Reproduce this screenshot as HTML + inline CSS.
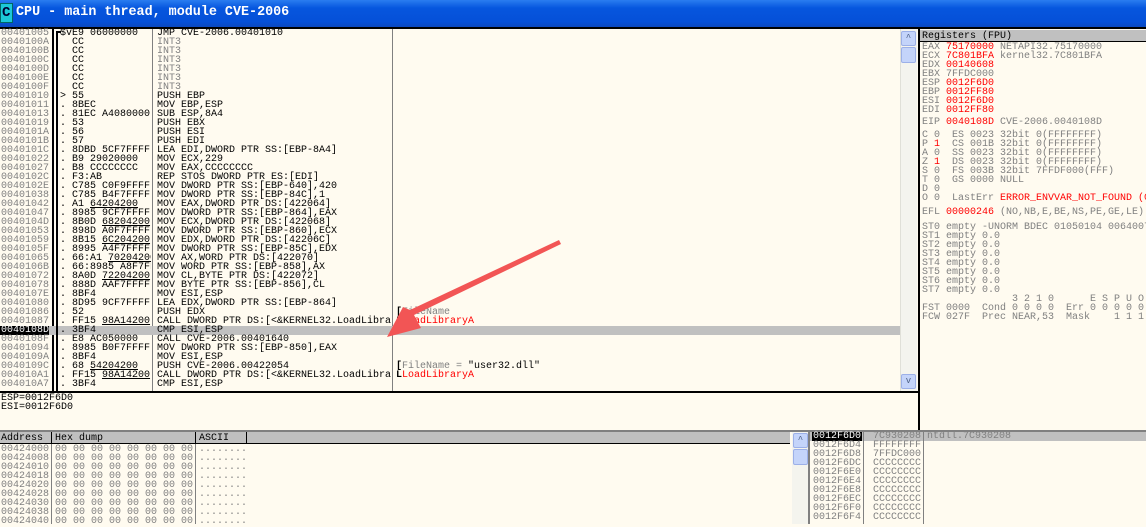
<!DOCTYPE html>
<html><head><meta charset="utf-8"><style>
*{margin:0;padding:0;box-sizing:border-box}
body{width:1146px;height:524px;overflow:hidden;background:#fffbf0;position:relative;font-family:"Liberation Mono",monospace;font-size:10px;line-height:9px}
.a{position:absolute;white-space:pre}
pre{font-family:"Liberation Mono",monospace;font-size:10px;line-height:9px;margin:0}
.g{color:#808080}.r{color:#f00}.k{color:#000}
u{text-decoration:underline}
</style></head><body>
<!-- title -->
<div class="a" style="left:0;top:0;width:1146px;height:27px;background:linear-gradient(#2a7df0,#0656de 30%,#0550d8 80%,#0a48c0)"></div>
<div class="a" style="left:0;top:3px;width:13px;height:20px;background:#1cc8d8;border:1px solid #066"></div>
<div class="a" style="left:2px;top:5px;font:bold 14px 'Liberation Mono',monospace;line-height:16px;color:#003">C</div>
<div class="a" style="left:16px;top:5px;font:bold 13.4px 'Liberation Mono',monospace;line-height:16px;color:#fff">CPU - main thread, module CVE-2006</div>
<div class="a" style="left:0;top:27px;width:1146px;height:2px;background:#000"></div>

<!-- disasm pane -->
<div class="a" style="left:0;top:29px;width:900px;height:362px;background:#fffbf0"></div>
<div class="a" style="left:52px;top:29px;width:2px;height:362px;background:#000"></div>
<div class="a" style="left:152px;top:29px;width:1px;height:362px;background:#808080"></div>
<div class="a" style="left:392px;top:29px;width:1px;height:362px;background:#808080"></div>
<div class="a" style="left:0;top:326px;width:900px;height:9px;background:#c0c0c0"></div>
<div class="a" style="left:0;top:326px;width:49px;height:9px;background:#000"></div>
<pre class="a g" style="left:1px;top:29px">00401005
0040100A
0040100B
0040100C
0040100D
0040100E
0040100F
00401010
00401011
00401013
00401019
0040101A
0040101B
0040101C
00401022
00401027
0040102C
0040102E
00401038
00401042
00401047
0040104D
00401053
00401059
0040105F
00401065
0040106B
00401072
00401078
0040107E
00401080
00401086
00401087
<span style="color:#fff">0040108D</span>
0040108F
00401094
0040109A
0040109C
004010A1
004010A7</pre>
<div class="a" style="left:56px;top:31px;width:2px;height:360px;background:#000"></div>
<div class="a" style="left:56px;top:31px;width:5px;height:2px;background:#000"></div>
<pre class="a k" style="left:54px;top:29px;overflow:hidden;width:97px"> $vE9 06000000
   CC
   CC
   CC
   CC
   CC
   CC
 > 55
 . 8BEC
 . 81EC A4080000
 . 53
 . 56
 . 57
 . 8DBD 5CF7FFFF
 . B9 29020000
 . B8 CCCCCCCC
 . F3:AB
 . C785 C0F9FFFF
 . C785 B4F7FFFF
 . A1 <u>64204200</u>
 . 8985 9CF7FFFF
 . 8B0D <u>68204200</u>
 . 898D A0F7FFFF
 . 8B15 <u>6C204200</u>
 . 8995 A4F7FFFF
 . 66:A1 <u>70204200</u>
 . 66:8985 A8F7FFFF
 . 8A0D <u>72204200</u>
 . 888D AAF7FFFF
 . 8BF4
 . 8D95 9CF7FFFF
 . 52
 . FF15 <u>98A14200</u>
 . 3BF4
 . E8 AC050000
 . 8985 B0F7FFFF
 . 8BF4
 . 68 <u>54204200</u>
 . FF15 <u>98A14200</u>
 . 3BF4</pre>
<div class="a" style="left:56px;top:31px;width:2px;height:360px;background:#000"></div>
<pre class="a k" style="left:157px;top:29px;overflow:hidden;width:234px">JMP CVE-2006.00401010
<span class="g">INT3
INT3
INT3
INT3
INT3
INT3</span>
PUSH EBP
MOV EBP,ESP
SUB ESP,8A4
PUSH EBX
PUSH ESI
PUSH EDI
LEA EDI,DWORD PTR SS:[EBP-8A4]
MOV ECX,229
MOV EAX,CCCCCCCC
REP STOS DWORD PTR ES:[EDI]
MOV DWORD PTR SS:[EBP-640],420
MOV DWORD PTR SS:[EBP-84C],1
MOV EAX,DWORD PTR DS:[422064]
MOV DWORD PTR SS:[EBP-864],EAX
MOV ECX,DWORD PTR DS:[422068]
MOV DWORD PTR SS:[EBP-860],ECX
MOV EDX,DWORD PTR DS:[42206C]
MOV DWORD PTR SS:[EBP-85C],EDX
MOV AX,WORD PTR DS:[422070]
MOV WORD PTR SS:[EBP-858],AX
MOV CL,BYTE PTR DS:[422072]
MOV BYTE PTR SS:[EBP-856],CL
MOV ESI,ESP
LEA EDX,DWORD PTR SS:[EBP-864]
PUSH EDX
CALL DWORD PTR DS:[&lt;&amp;KERNEL32.LoadLibra
CMP ESI,ESP
CALL CVE-2006.00401640
MOV DWORD PTR SS:[EBP-850],EAX
MOV ESI,ESP
PUSH CVE-2006.00422054
CALL DWORD PTR DS:[&lt;&amp;KERNEL32.LoadLibra
CMP ESI,ESP</pre>
<pre class="a" style="left:396px;top:308px"><b>[</b><span class="g">FileName</span>
<b>L</b><span class="r">LoadLibraryA</span></pre>
<pre class="a" style="left:396px;top:362px"><b>[</b><span class="g">FileName = </span>"user32.dll"
<b>L</b><span class="r">LoadLibraryA</span></pre>
<!-- scrollbar -->
<div class="a" style="left:900px;top:29px;width:17px;height:362px;background:#f4f4ee;border-left:1px solid #e0e0d8"></div>
<div class="a" style="left:901px;top:31px;width:15px;height:15px;background:#c4d4fa;border:1px solid #9cb0e8;border-radius:2px;color:#4d6185;font-size:9px;text-align:center;line-height:13px">^</div>
<div class="a" style="left:901px;top:47px;width:15px;height:16px;background:#c4d4fa;border:1px solid #9cb0e8;border-radius:2px"></div>
<div class="a" style="left:901px;top:374px;width:15px;height:15px;background:#c4d4fa;border:1px solid #9cb0e8;border-radius:2px;color:#4d6185;font-size:9px;text-align:center;line-height:13px">v</div>
<div class="a" style="left:0;top:391px;width:918px;height:2px;background:#000"></div>

<!-- registers -->
<div class="a" style="left:918px;top:29px;width:2px;height:402px;background:#000"></div>
<div class="a" style="left:920px;top:30px;width:226px;height:12px;background:#c0c0c0;border-bottom:1px solid #000"></div>
<pre class="a k" style="left:922px;top:32px">Registers (FPU)</pre>
<pre class="a g" style="left:922px;top:43px">EAX <span class="r">75170000</span> NETAPI32.75170000
ECX <span class="r">7C801BFA</span> kernel32.7C801BFA
EDX <span class="r">00140608</span>
EBX 7FFDC000
ESP <span class="r">0012F6D0</span>
EBP <span class="r">0012FF80</span>
ESI <span class="r">0012F6D0</span>
EDI <span class="r">0012FF80</span></pre>
<pre class="a g" style="left:922px;top:118px">EIP <span class="r">0040108D</span> CVE-2006.0040108D</pre>
<pre class="a g" style="left:922px;top:131px">C 0  ES 0023 32bit 0(FFFFFFFF)
P <span class="r">1</span>  CS 001B 32bit 0(FFFFFFFF)
A 0  SS 0023 32bit 0(FFFFFFFF)
Z <span class="r">1</span>  DS 0023 32bit 0(FFFFFFFF)
S 0  FS 003B 32bit 7FFDF000(FFF)
T 0  GS 0000 NULL
D 0
O 0  LastErr <span class="r">ERROR_ENVVAR_NOT_FOUND (0</span></pre>
<pre class="a g" style="left:922px;top:208px">EFL <span class="r">00000246</span> (NO,NB,E,BE,NS,PE,GE,LE)</pre>
<pre class="a g" style="left:922px;top:223px">ST0 empty -UNORM BDEC 01050104 0064007
ST1 empty 0.0
ST2 empty 0.0
ST3 empty 0.0
ST4 empty 0.0
ST5 empty 0.0
ST6 empty 0.0
ST7 empty 0.0
               3 2 1 0      E S P U O
FST 0000  Cond 0 0 0 0  Err 0 0 0 0 0
FCW 027F  Prec NEAR,53  Mask    1 1 1</pre>

<!-- info pane -->
<pre class="a k" style="left:1px;top:394px">ESP=0012F6D0
ESI=0012F6D0</pre>
<div class="a" style="left:0;top:430px;width:1146px;height:2px;background:#808080"></div>

<!-- dump -->
<div class="a" style="left:0;top:432px;width:790px;height:12px;background:#c0c0c0;border-bottom:1px solid #000"></div>
<div class="a" style="left:0;top:432px;width:247px;height:12px;border-right:1px solid #000"></div>
<div class="a" style="left:51px;top:432px;width:1px;height:12px;background:#000"></div>
<div class="a" style="left:195px;top:432px;width:1px;height:12px;background:#000"></div>
<pre class="a k" style="left:1px;top:434px">Address  Hex dump                ASCII</pre>
<div class="a" style="left:51px;top:444px;width:1px;height:80px;background:#808080"></div>
<div class="a" style="left:195px;top:444px;width:1px;height:80px;background:#808080"></div>
<pre class="a g" style="left:1px;top:445px">00424000 00 00 00 00 00 00 00 00 ........
00424008 00 00 00 00 00 00 00 00 ........
00424010 00 00 00 00 00 00 00 00 ........
00424018 00 00 00 00 00 00 00 00 ........
00424020 00 00 00 00 00 00 00 00 ........
00424028 00 00 00 00 00 00 00 00 ........
00424030 00 00 00 00 00 00 00 00 ........
00424038 00 00 00 00 00 00 00 00 ........
00424040 00 00 00 00 00 00 00 00 ........</pre>
<div class="a" style="left:792px;top:432px;width:16px;height:92px;background:#f4f4ee"></div>
<div class="a" style="left:793px;top:433px;width:15px;height:15px;background:#c4d4fa;border:1px solid #9cb0e8;border-radius:2px;color:#4d6185;font-size:9px;text-align:center;line-height:13px">^</div>
<div class="a" style="left:793px;top:449px;width:15px;height:16px;background:#c4d4fa;border:1px solid #9cb0e8;border-radius:2px"></div>
<!-- stack -->
<div class="a" style="left:808px;top:432px;width:2px;height:92px;background:#808080"></div>
<div class="a" style="left:810px;top:432px;width:336px;height:9px;background:#c0c0c0"></div>
<div class="a" style="left:812px;top:432px;width:50px;height:9px;background:#000"></div>
<div class="a" style="left:863px;top:432px;width:1px;height:92px;background:#808080"></div>
<div class="a" style="left:923px;top:432px;width:1px;height:92px;background:#808080"></div>
<pre class="a g" style="left:813px;top:432px"><span style="color:#fff">0012F6D0</span>  7C930208 ntdll.7C930208
0012F6D4  FFFFFFFF
0012F6D8  7FFDC000
0012F6DC  CCCCCCCC
0012F6E0  CCCCCCCC
0012F6E4  CCCCCCCC
0012F6E8  CCCCCCCC
0012F6EC  CCCCCCCC
0012F6F0  CCCCCCCC
0012F6F4  CCCCCCCC</pre>

<!-- arrow -->
<svg class="a" style="left:0;top:0" width="1146" height="524">
<polygon points="559,240 561,244 414,315 421,328 387,337 403,307 410,310" fill="#f25555"/>
</svg>
</body></html>
